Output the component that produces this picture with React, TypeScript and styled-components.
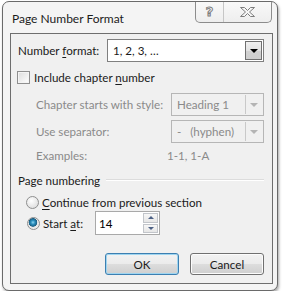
import styled, { createGlobalStyle } from 'styled-components'

const GlobalStyle = createGlobalStyle`
  html, body {
    margin: 0;
    padding: 0;
    background: #ffffff;
  }
  body {
    font-family: Lato, "Noto Sans", sans-serif;
    font-size: 11.6px;
    color: #1a1a1a;
  }
`

export default function App() {
  return (
    <>
      <GlobalStyle />
      <Window>
        <TitleBar>
          <Title>Page Number Format</Title>
          <CaptionButtons>
            <CaptionButton $w={28}>
              <HelpGlyph>?</HelpGlyph>
            </CaptionButton>
            <CaptionButton $w={47} $last>
              <svg width="17" height="12" viewBox="0 0 17 12">
                <path
                  d="M1.5 1.5 H5.5 L8.5 4.5 L11.5 1.5 H15.5 L10.5 6 L15.5 10.5 H11.5 L8.5 7.5 L5.5 10.5 H1.5 L6.5 6 Z"
                  fill="#f7f7f7"
                  stroke="#7d7d7d"
                  strokeWidth="1"
                  strokeLinejoin="round"
                />
              </svg>
            </CaptionButton>
          </CaptionButtons>
        </TitleBar>

        <Client>
          <Row $h={23} $top={5}>
            <Label $w={89}>Number <u>f</u>ormat:</Label>
            <Combo $w={157}>
              <ComboText>1, 2, 3, …</ComboText>
              <DropButton>
                <Arrow />
              </DropButton>
            </Combo>
          </Row>

          <Row $h={13} $top={9} $left={-1}>
            <CheckBox />
            <Label>Include chapter <u>n</u>umber</Label>
          </Row>

          <Row $h={23} $top={9} $left={18}>
            <Label $w={135} $disabled>Chapter starts with style:</Label>
            <Combo $w={93} $disabled>
              <ComboText $disabled>Heading 1</ComboText>
              <DropButton $disabled>
                <Arrow $disabled />
              </DropButton>
            </Combo>
          </Row>

          <Row $h={23} $top={4} $left={18}>
            <Label $w={135} $disabled>Use separator:</Label>
            <Combo $w={93} $disabled>
              <ComboText $disabled>-&nbsp;&nbsp;&nbsp;(hyphen)</ComboText>
              <DropButton $disabled>
                <Arrow $disabled />
              </DropButton>
            </Combo>
          </Row>

          <Row $h={16} $top={4} $left={18}>
            <Label $w={131} $disabled>Examples:</Label>
            <Label $disabled>1-1, 1-A</Label>
          </Row>

          <GroupHeader>
            <span>Page numbering</span>
            <GroupLine />
          </GroupHeader>

          <Row $h={16} $top={6} $left={8}>
            <Radio />
            <Label><u>C</u>ontinue from previous section</Label>
          </Row>

          <Row $h={24} $top={1} $left={9}>
            <Radio $checked />
            <Label $w={52}>Start <u>a</u>t:</Label>
            <SpinBox>
              <SpinText>14</SpinText>
              <SpinButtons>
                <SpinButton>
                  <SpinArrow $up />
                </SpinButton>
                <SpinButton>
                  <SpinArrow />
                </SpinButton>
              </SpinButtons>
            </SpinBox>
          </Row>

          <ButtonRow>
            <PushButton $default>OK</PushButton>
            <PushButton>Cancel</PushButton>
          </ButtonRow>
        </Client>
      </Window>
    </>
  )
}

const Window = styled.div`
  margin: 1px 0 0 2px;
  width: 276px;
  height: 290px;
  box-sizing: border-box;
  border: 1px solid #6a6a6a;
  border-radius: 7px;
  background: #f4f4f4;
  box-shadow: 1px 2px 3px rgba(0, 0, 0, 0.35);
  display: flex;
  flex-direction: column;
  overflow: hidden;
`

const TitleBar = styled.div`
  height: 31px;
  display: flex;
  align-items: flex-start;
  justify-content: space-between;
`

const Title = styled.div`
  padding: 9px 0 0 9px;
  font-size: 12px;
  color: #1c1c1c;
`

const CaptionButtons = styled.div`
  display: flex;
  margin: -1px 5px 0 0;
  border: 1px solid #8c8c8c;
  border-top: none;
  border-radius: 0 0 5px 5px;
  background: linear-gradient(#f9f9f9, #eeeeee);
  height: 21px;
  overflow: hidden;
`

const CaptionButton = styled.div<{ $w: number; $last?: boolean }>`
  width: ${p => p.$w}px;
  height: 100%;
  display: flex;
  align-items: center;
  justify-content: center;
  border-right: ${p => (p.$last ? 'none' : '1px solid #c6c6c6')};
  box-sizing: border-box;
`

const HelpGlyph = styled.span`
  font-family: "DejaVu Sans", sans-serif;
  font-weight: bold;
  font-size: 13px;
  color: #f7f7f7;
  -webkit-text-stroke: 1px #7d7d7d;
  line-height: 1;
`

const Client = styled.div`
  flex: 1;
  margin: 0 4px 6px 7px;
  border: 1px solid #6e6e6e;
  background: #f0f0f0;
  padding: 0 8px 0 7px;
  display: flex;
  flex-direction: column;
`

const Row = styled.div<{ $h: number; $top: number; $left?: number }>`
  height: ${p => p.$h}px;
  margin-top: ${p => p.$top}px;
  margin-left: ${p => p.$left ?? 0}px;
  display: flex;
  align-items: center;
`

const Label = styled.span<{ $w?: number; $disabled?: boolean }>`
  ${p => (p.$w ? `width: ${p.$w}px; flex: none;` : '')}
  color: ${p => (p.$disabled ? '#8a8a8a' : '#1a1a1a')};
  white-space: nowrap;
  u {
    text-underline-offset: 2px;
  }
`

const Combo = styled.div<{ $w: number; $disabled?: boolean }>`
  width: ${p => p.$w}px;
  height: 100%;
  box-sizing: border-box;
  border: 1px solid ${p => (p.$disabled ? '#b6b6b6' : '#7f7f7f')};
  background: ${p => (p.$disabled ? '#f0f0f0' : '#ffffff')};
  display: flex;
  align-items: stretch;
  padding: 1px;
`

const ComboText = styled.div<{ $disabled?: boolean }>`
  flex: 1;
  display: flex;
  align-items: center;
  padding-left: 4px;
  color: ${p => (p.$disabled ? '#8a8a8a' : '#1a1a1a')};
  white-space: nowrap;
`

const DropButton = styled.div<{ $disabled?: boolean }>`
  width: 17px;
  box-sizing: border-box;
  display: flex;
  align-items: center;
  justify-content: center;
  ${p =>
    p.$disabled
      ? 'border-left: 1px solid #c9c9c9; background: #f0f0f0;'
      : 'border: 1px solid #707070; background: linear-gradient(#f0f0f0, #e2e2e2 50%, #d2d2d2 51%, #cfcfcf);'}
`

const Arrow = styled.div<{ $disabled?: boolean }>`
  width: 0;
  height: 0;
  border-left: 4px solid transparent;
  border-right: 4px solid transparent;
  border-top: 4px solid ${p => (p.$disabled ? '#b4b4b4' : '#000000')};
  margin-top: 1px;
`

const CheckBox = styled.div`
  width: 13px;
  height: 13px;
  box-sizing: border-box;
  border: 1px solid #8f8f8f;
  background: linear-gradient(135deg, #dcdcdc, #ffffff);
  box-shadow: inset 0 0 0 1px #f4f4f4;
  margin-right: 4px;
  flex: none;
`

const Radio = styled.div<{ $checked?: boolean }>`
  width: 13px;
  height: 13px;
  box-sizing: border-box;
  border-radius: 50%;
  border: 1px solid #8e8f8f;
  background: ${p =>
    p.$checked
      ? 'radial-gradient(circle at 45% 40%, #8fd3f0 0, #2a8fbd 2px, #1b5f84 4px, #e6e6e6 4.6px, #f4f4f4)'
      : 'radial-gradient(circle at 40% 35%, #ffffff, #dedede 80%)'};
  margin-right: 3px;
  flex: none;
`

const GroupHeader = styled.div`
  margin-top: 9px;
  height: 16px;
  display: flex;
  align-items: center;
  color: #1a1a1a;
  span {
    white-space: nowrap;
  }
`

const GroupLine = styled.div`
  flex: 1;
  height: 1px;
  margin-left: 6px;
  background: #dcdcdc;
  border-bottom: 1px solid #ffffff;
`

const SpinBox = styled.div`
  width: 65px;
  height: 100%;
  box-sizing: border-box;
  border: 1px solid #a9a9a9;
  background: #ffffff;
  display: flex;
`

const SpinText = styled.div`
  flex: 1;
  display: flex;
  align-items: center;
  padding-left: 3px;
  color: #000;
`

const SpinButtons = styled.div`
  width: 15px;
  display: flex;
  flex-direction: column;
  padding: 1px 1px 1px 0;
  gap: 1px;
`

const SpinButton = styled.div`
  flex: 1;
  box-sizing: border-box;
  border: 1px solid #c2c5ca;
  background: linear-gradient(#f7f7f7, #e6e6e6);
  display: flex;
  align-items: center;
  justify-content: center;
`

const SpinArrow = styled.div<{ $up?: boolean }>`
  width: 0;
  height: 0;
  border-left: 3px solid transparent;
  border-right: 3px solid transparent;
  ${p => (p.$up ? 'border-bottom: 3px solid #4d6185;' : 'border-top: 3px solid #4d6185;')}
`

const ButtonRow = styled.div`
  margin-top: auto;
  margin-bottom: 8px;
  display: flex;
  justify-content: flex-end;
  gap: 11px;
`

const PushButton = styled.div<{ $default?: boolean }>`
  width: 74px;
  height: 22px;
  box-sizing: border-box;
  border: 1px solid ${p => (p.$default ? '#3c7fb1' : '#707070')};
  border-radius: 3px;
  background: linear-gradient(#f2f2f2, #ebebeb 50%, #dddddd 51%, #cfcfcf);
  box-shadow: inset 0 0 0 1px ${p => (p.$default ? '#9fd5f0' : '#fcfcfc')};
  display: flex;
  align-items: center;
  justify-content: center;
  color: #1a1a1a;
`
